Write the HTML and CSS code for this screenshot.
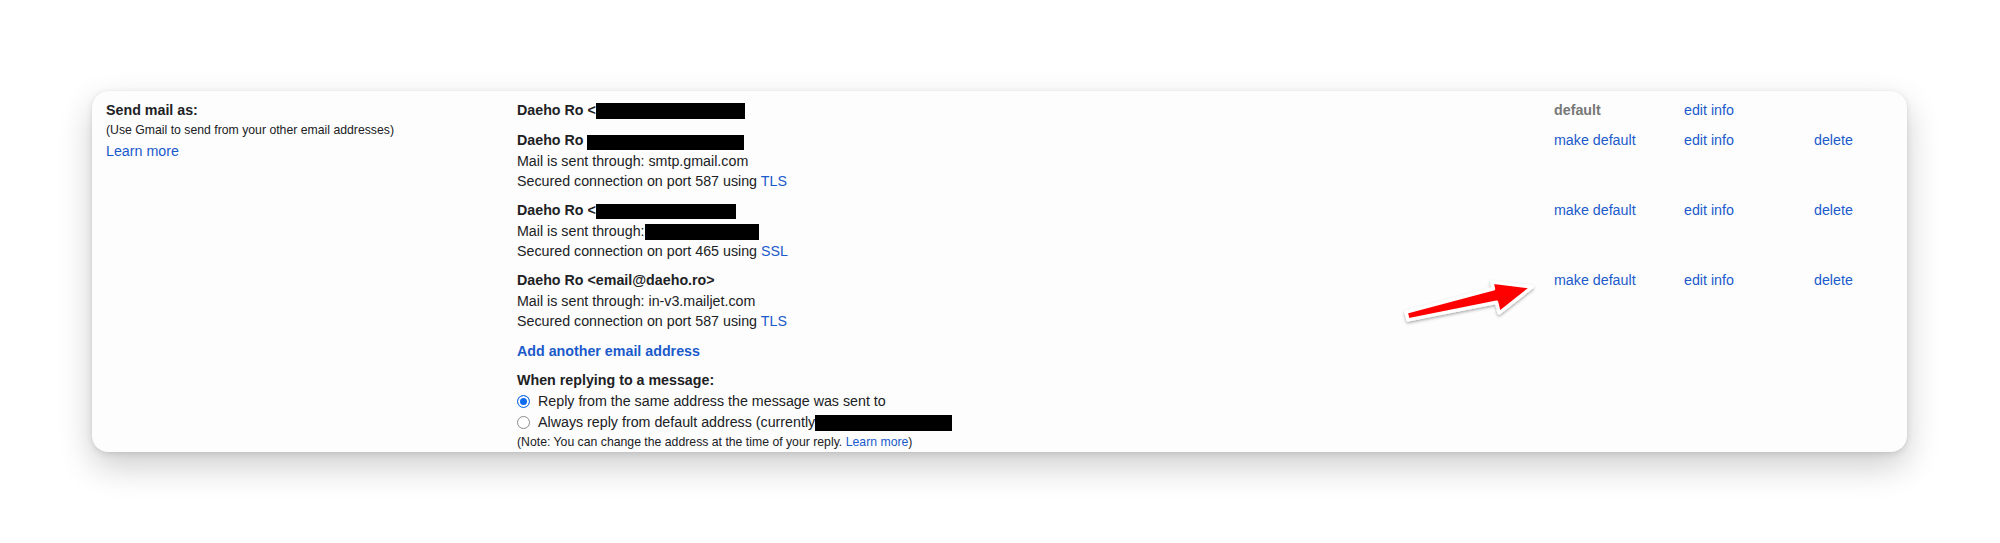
FILE: index.html
```html
<!DOCTYPE html>
<html lang="en">
<head>
<meta charset="utf-8">
<title>Send mail as</title>
<link rel="stylesheet" href="styles.css">
</head>
<body>
<div class="card">
  <div class="label-col">
    <div class="label-title">Send mail as:</div>
    <div class="label-sub">(Use Gmail to send from your other email addresses)</div>
    <div class="label-link"><a class="link">Learn more</a></div>
  </div>
  <div class="content-col">
    <div class="account first">
      <div class="acc-info">
        <div class="acc-name">Daeho Ro &lt;<span class="redact r1"></span></div>
      </div>
      <div class="act act-default">default</div>
      <div class="act"><a class="link">edit info</a></div>
      <div class="act"></div>
    </div>
    <div class="account">
      <div class="acc-info">
        <div class="acc-name">Daeho Ro <span class="redact r2"></span></div>
        <div class="line">Mail is sent through: smtp.gmail.com</div>
        <div class="line">Secured connection on port 587 using <a class="link">TLS</a></div>
      </div>
      <div class="act"><a class="link">make default</a></div>
      <div class="act"><a class="link">edit info</a></div>
      <div class="act"><a class="link">delete</a></div>
    </div>
    <div class="account">
      <div class="acc-info">
        <div class="acc-name">Daeho Ro &lt;<span class="redact r3"></span></div>
        <div class="line">Mail is sent through:<span class="redact r4"></span></div>
        <div class="line">Secured connection on port 465 using <a class="link">SSL</a></div>
      </div>
      <div class="act"><a class="link">make default</a></div>
      <div class="act"><a class="link">edit info</a></div>
      <div class="act"><a class="link">delete</a></div>
    </div>
    <div class="account">
      <div class="acc-info">
        <div class="acc-name">Daeho Ro &lt;email@daeho.ro&gt;</div>
        <div class="line">Mail is sent through: in-v3.mailjet.com</div>
        <div class="line">Secured connection on port 587 using <a class="link">TLS</a></div>
      </div>
      <div class="act"><a class="link">make default</a></div>
      <div class="act"><a class="link">edit info</a></div>
      <div class="act"><a class="link">delete</a></div>
    </div>
    <div class="add"><a class="link link-bold">Add another email address</a></div>
    <div class="reply">
      <div class="reply-title">When replying to a message:</div>
      <div class="radio-row"><span class="radio checked"></span><span>Reply from the same address the message was sent to</span></div>
      <div class="radio-row"><span class="radio"></span><span>Always reply from default address (currently<span class="redact r5"></span></span></div>
      <div class="note">(Note: You can change the address at the time of your reply. <a class="link">Learn more</a>)</div>
    </div>
  </div>
  <svg class="arrow" width="160" height="64" viewBox="0 0 160 64" aria-hidden="true">
    <defs>
      <filter id="sh" x="-20%" y="-40%" width="140%" height="180%">
        <feDropShadow dx="0" dy="1.5" stdDeviation="1.8" flood-color="#000" flood-opacity="0.35"/>
      </filter>
    </defs>
    <polygon points="16.1,42.1 103.4,18.7 101.8,11.9 142,17 109.1,43.0 106.6,32.3 17.9,49.9" fill="#ff0000" stroke="#ffffff" stroke-width="3.5" stroke-linejoin="round" filter="url(#sh)"/>
  </svg>
</div>
</body>
</html>
```

FILE: styles.css
```css
html, body {
  margin: 0;
  padding: 0;
  background: #ffffff;
}

body {
  font-family: "Liberation Sans", Arial, sans-serif;
  font-size: 14.25px;
  color: #202124;
  width: 2000px;
  height: 543px;
  overflow: hidden;
}

.card {
  position: relative;
  box-sizing: border-box;
  margin: 91px 0 0 92px;
  width: 1815px;
  height: 361px;
  padding: 9px 0 0 14px;
  background: #fdfdfd;
  border-radius: 16px;
  box-shadow: 0 14px 34px rgba(0, 0, 0, 0.20), 0 2px 6px rgba(0, 0, 0, 0.10), 0 0 1px rgba(0, 0, 0, 0.12);
  display: flex;
}

.link {
  color: #1a5acb;
  text-decoration: none;
  cursor: pointer;
}

.link-bold {
  font-weight: bold;
}

.label-col {
  width: 411px;
  flex: none;
}

.label-title {
  font-weight: bold;
  line-height: 20px;
}

.label-sub {
  font-size: 12.25px;
  line-height: 21px;
}

.label-link {
  line-height: 20px;
}

.content-col {
  flex: 1;
  display: flex;
  flex-direction: column;
}

.account {
  display: grid;
  grid-template-columns: 1037px 130px 130px 1fr;
  line-height: 20.4px;
  margin-bottom: 8.8px;
}

.account.first {
  margin-bottom: 9.8px;
}

.acc-name {
  font-weight: bold;
}

.act-default {
  color: #777777;
  font-weight: bold;
}

.redact {
  display: inline-block;
  background: #000000;
  height: 16px;
  vertical-align: -4px;
}

.r1 { width: 149px; }
.r2 { width: 157px; height: 15px; vertical-align: -5px; }
.r3 { width: 140px; height: 15px; }
.r4 { width: 114px; }
.r5 { width: 137px; }

.add {
  line-height: 20.4px;
  margin-top: 0.8px;
  margin-bottom: 9px;
}

.reply-title {
  font-weight: bold;
  line-height: 20.4px;
}

.radio-row {
  display: flex;
  align-items: center;
  gap: 8px;
  height: 21px;
}

.radio {
  box-sizing: border-box;
  width: 13px;
  height: 13px;
  border-radius: 50%;
  border: 1px solid #8a8a8a;
  background: #ffffff;
  flex: none;
}

.radio.checked {
  border: 1px solid #1a6fe8;
  background: #0b6cf0;
  box-shadow: inset 0 0 0 2px #ffffff;
}

.note {
  font-size: 12.25px;
  line-height: 19px;
}

.arrow {
  position: absolute;
  left: 1298px;
  top: 179px;
  overflow: visible;
}
```
